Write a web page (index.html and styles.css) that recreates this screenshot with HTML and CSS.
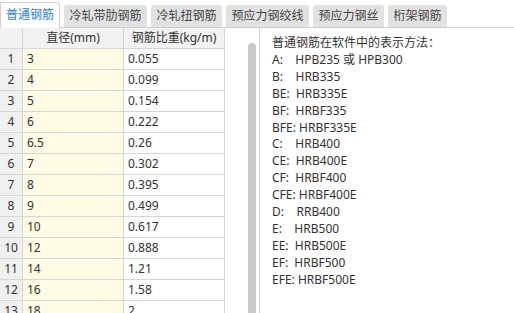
FILE: index.html
```html
<!DOCTYPE html>
<html lang="zh">
<head>
<meta charset="utf-8">
<link rel="stylesheet" href="styles.css">
</head>
<body>
<div class="tabs">
  <div class="tab active">普通钢筋</div>
  <div class="tab">冷轧带肋钢筋</div>
  <div class="tab">冷轧扭钢筋</div>
  <div class="tab">预应力钢绞线</div>
  <div class="tab">预应力钢丝</div>
  <div class="tab">桁架钢筋</div>
</div>
<div class="main">
  <div class="left">
    <div class="grid">
      <div class="hd"></div><div class="hd">直径(mm)</div><div class="hd">钢筋比重(kg/m)</div>
      <div class="rn">1</div><div class="d">3</div><div class="w">0.055</div>
      <div class="rn">2</div><div class="d">4</div><div class="w">0.099</div>
      <div class="rn">3</div><div class="d">5</div><div class="w">0.154</div>
      <div class="rn">4</div><div class="d">6</div><div class="w">0.222</div>
      <div class="rn">5</div><div class="d">6.5</div><div class="w">0.26</div>
      <div class="rn">6</div><div class="d">7</div><div class="w">0.302</div>
      <div class="rn">7</div><div class="d">8</div><div class="w">0.395</div>
      <div class="rn">8</div><div class="d">9</div><div class="w">0.499</div>
      <div class="rn">9</div><div class="d">10</div><div class="w">0.617</div>
      <div class="rn">10</div><div class="d">12</div><div class="w">0.888</div>
      <div class="rn">11</div><div class="d">14</div><div class="w">1.21</div>
      <div class="rn">12</div><div class="d">16</div><div class="w">1.58</div>
      <div class="rn">13</div><div class="d">18</div><div class="w">2</div>
    </div>
    <div class="track"><div class="thumb"></div></div>
  </div>
  <div class="info">
<div class="line">普通钢筋在软件中的表示方法：</div>
<div class="line">A:    HPB235 或 HPB300</div>
<div class="line">B:    HRB335</div>
<div class="line">BE:  HRB335E</div>
<div class="line">BF:  HRBF335</div>
<div class="line">BFE: HRBF335E</div>
<div class="line">C:    HRB400</div>
<div class="line">CE:  HRB400E</div>
<div class="line">CF:  HRBF400</div>
<div class="line">CFE: HRBF400E</div>
<div class="line">D:    RRB400</div>
<div class="line">E:    HRB500</div>
<div class="line">EE:  HRB500E</div>
<div class="line">EF:  HRBF500</div>
<div class="line">EFE: HRBF500E</div>
  </div>
</div>
</body>
</html>
```
FILE: styles.css
```css
html, body {
  margin: 0;
  padding: 0;
  background: #fff;
  width: 514px;
  height: 313px;
  overflow: hidden;
  font-family: "Noto Sans", "Noto Sans CJK SC", sans-serif;
  font-size: 12px;
  color: #333;
}
.tabs {
  display: flex;
  align-items: flex-end;
  gap: 4px;
  height: 27px;
  border-bottom: 1px solid #cfcfcf;
}
.tab {
  height: 22px;
  line-height: 22px;
  padding: 0 5.5px;
  background: #e2e2e2;
  color: #444;
  border-radius: 3px 3px 0 0;
  white-space: nowrap;
}
.tab.active {
  height: 25px;
  line-height: 24px;
  padding: 0 5px;
  background: #fff;
  color: #2b7de0;
  border: 1px solid #cfcfcf;
  border-bottom: none;
  border-radius: 0 4px 0 0;
  margin-bottom: -1px;
}
.main {
  display: flex;
  height: 285px;
}
.left {
  display: flex;
  width: 259px;
  border-right: 1px solid #cfcfcf;
  overflow: hidden;
}
.grid {
  display: grid;
  grid-template-columns: 22px 100px 100px;
  grid-auto-rows: 20px;
  gap: 1px;
  background: #d6d6d6;
  border-right: 1px solid #d6d6d6;
  align-self: flex-start;
  width: 224px;
}
.grid > div {
  line-height: 20px;
  white-space: nowrap;
}
.hd {
  background: #f2f2f2;
  text-align: center;
  color: #333;
}
.rn {
  background: #f0f0f0;
  text-align: center;
}
.d {
  background: #fffbe4;
  padding-left: 4px;
}
.w {
  background: #fff;
  padding-left: 4px;
}
.track {
  margin-left: 23px;
  padding-top: 15px;
  width: 8px;
}
.thumb {
  width: 8px;
  height: 400px;
  background: #c9c9c9;
  border-radius: 4px 4px 0 0;
}
.info {
  padding: 7px 0 0 12px;
}
.line {
  white-space: pre;
  line-height: 16.9px;
  color: #333;
}
```
